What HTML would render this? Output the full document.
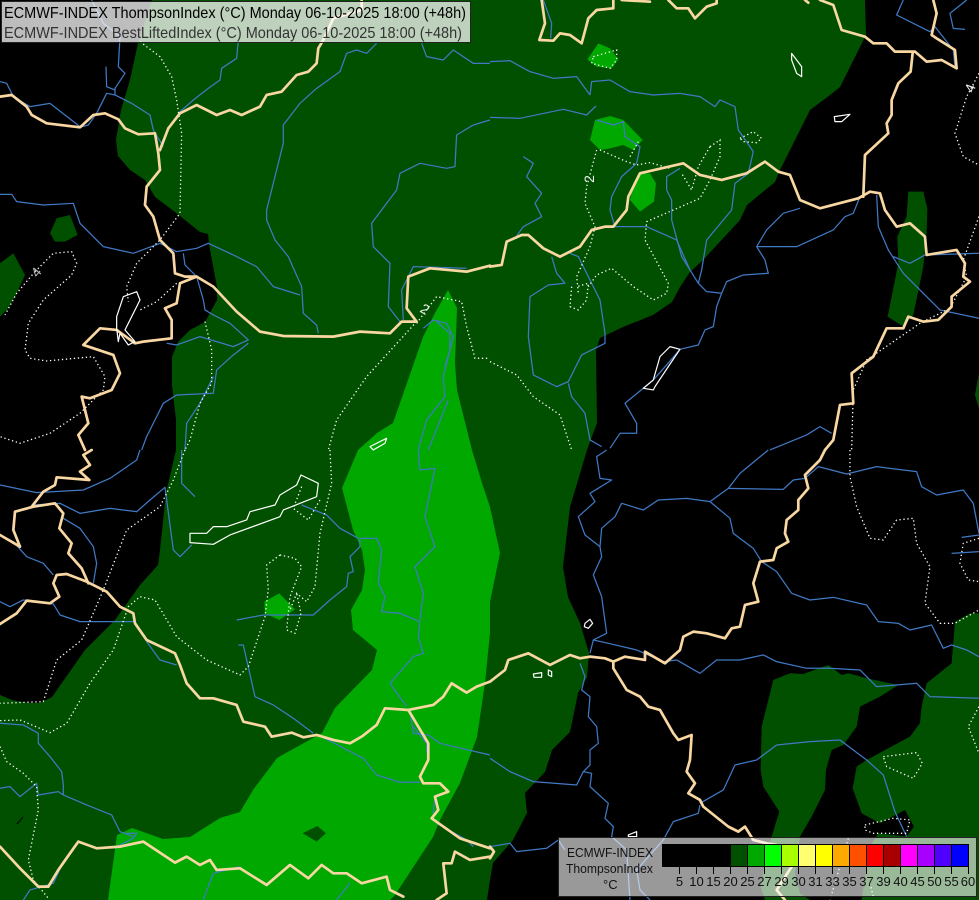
<!DOCTYPE html>
<html><head><meta charset="utf-8"><title>ECMWF-INDEX ThompsonIndex</title>
<style>
html,body{margin:0;padding:0;background:#000;overflow:hidden}
svg{display:block;position:absolute;left:0;top:0}
.r polyline{fill:none;stroke:#4079c4;stroke-width:1.25;stroke-linejoin:round;vector-effect:non-scaling-stroke}
.d polyline{fill:none;stroke:#fff;stroke-width:1.3;stroke-dasharray:1.3 2.7;vector-effect:non-scaling-stroke}
.b polyline{fill:none;stroke:#f9d7a2;stroke-width:2.7;stroke-linejoin:round;stroke-linecap:round;vector-effect:non-scaling-stroke}
.l polygon{fill:none;stroke:#fff;stroke-width:1.2;stroke-linejoin:round;vector-effect:non-scaling-stroke}
text{font-family:"Liberation Sans",sans-serif}
</style></head><body>
<svg width="979" height="900" viewBox="0 0 979 900" xmlns="http://www.w3.org/2000/svg">
<rect width="979" height="900" fill="#000"/>
<!-- dark green -->
<g fill="#005000">
<polygon points="152,0 865,0 866,35 840,87 830,95 810,110 780,170 775,182 747,205 740,220 703,260 690,272 680,287 672,302 653,315 623,327 600,338 596,350 597,423 587,450 570,507 563,567 568,597 580,623 589,653 587,677 578,693 570,732 552,750 545,772 525,793 527,813 513,840 493,863 490,880 487,900 0,900 0,695 12,700 28,703 40,703 52,697 85,650 115,620 140,585 158,565 160,550 166,493 176,450 176,420 172,385 172,357 178,342 190,330 205,322 217,300 217,287 210,250 208,234 200,232 175,212 155,197 145,180 130,170 118,156 116,140 121,110 130,80 138,43"/>
<g transform="scale(.3333)">
<polygon points="150,700 170,655 210,645 233,705 195,725 165,725"/>
<polygon points="0,790 40,760 75,825 50,880 25,925 0,950"/>
</g>
<g transform="translate(490,0) scale(.3333)">
<polygon points="1255,575 1300,575 1312,625 1310,700 1300,800 1270,945 1240,980 1193,950 1225,790 1222,710 1250,650"/>
<polygon points="1467,1120 1455,1185 1467,1225"/>
</g>
<g transform="translate(490,450) scale(.3333)">
<polygon points="850,690 900,670 940,672 1015,645 1055,675 1075,670 1130,685 1225,705 1170,740 1110,770 1100,830 1060,885 1025,900 1008,960 1005,1020 965,1100 930,1160 915,1270 930,1330 960,1350 825,1350 812,1310 825,1240 845,1160 868,1085 820,1010 812,960 815,830"/>
<polygon points="1467,490 1440,490 1395,515 1385,640 1310,700 1295,770 1290,820 1260,860 1130,930 1100,950 1088,1015 1115,1090 1170,1120 1245,1080 1272,1130 1250,1160 1165,1150 1140,1190 1115,1350 1467,1350"/>
</g>
</g>
<!-- mid green -->
<g fill="#00a800">
<polygon points="448,290 457,308 455,363 457,390 472,450 482,483 490,507 500,553 490,602 490,633 485,683 477,737 460,783 440,820 433,837 395,895 390,900 108,900 117,835 132,828 163,839 190,837 220,818 240,812 253,790 277,758 322,733 335,708 372,670 377,650 353,630 351,610 362,590 365,570 362,550 353,530 342,488 358,450 377,433 393,423 423,337 435,313"/>
<g transform="translate(490,0) scale(.3333)">
<polygon points="325,130 360,145 385,178 365,205 320,200 292,178"/>
<polygon points="315,360 360,348 400,360 458,420 430,450 400,435 360,445 330,450 300,420"/>
<polygon points="445,520 480,520 498,550 492,605 450,635 420,600 430,550"/>
</g>
<g transform="translate(0,450) scale(.3333)">
<polygon points="838,430 885,478 838,510 795,490 793,455"/>
<polygon points="908,1150 952,1128 978,1150 950,1175" fill="#005000"/>
</g>
</g>
<!-- rivers -->
<g class="r">
<g transform="scale(.3333)">
<polyline points="275,0 310,70 360,110 355,200 375,220 345,265 345,285 320,280 290,340 265,375 240,382"/>
<polyline points="318,200 320,260 345,270"/>
<polyline points="0,245 20,250 40,290 90,320 150,310 240,380"/>
<polyline points="345,285 395,310 450,345 460,390 490,440"/>
<polyline points="715,120 710,175 665,205 660,240 625,265 580,300 540,335 505,385 480,455"/>
<polyline points="1130,130 1100,160 1070,150 1040,160 1020,215 950,265 900,310 850,375 850,430 830,510 800,630 800,660 825,720 865,770 905,860 910,940 950,975 955,1000"/>
<polyline points="1265,130 1280,170 1330,180 1360,150 1420,190 1470,190"/>
<polyline points="1470,360 1420,375 1370,405 1365,500 1340,505 1260,490 1200,520 1190,570 1115,670 1120,740 1170,790 1165,920 1200,965"/>
<polyline points="0,583 35,583 50,605 130,615 220,610 240,670 310,740 400,760 480,730 530,755 590,745 625,730 700,765 770,800 820,860 900,885"/>
<polyline points="550,760 555,795 590,830 610,900 615,930 640,945 690,970 745,1020 700,1040 600,1010 530,1035 500,1030"/>
<polyline points="745,1030 700,1065 650,1110 640,1180 530,1185 490,1210 440,1310 425,1350"/>
<polyline points="1210,960 1205,870 1240,800 1400,805"/>
<polyline points="640,1130 600,1210 560,1270 555,1350"/>
<polyline points="1270,985 1300,960 1340,970 1360,1010 1330,1130 1335,1190 1280,1260 1255,1350"/>
<polyline points="1285,1350 1345,1200"/>
<polyline points="1310,965 1350,1000 1350,1050 1335,1100"/>
</g>
<g transform="translate(490,0) scale(.3333)">
<polyline points="0,185 60,182 120,215 190,235 260,230 300,285"/>
<polyline points="300,285 305,245 360,240 420,275 490,285 570,280 630,290 675,320 690,300 735,320 745,390 790,455 775,520 735,550 725,630 650,720 635,810 625,850 650,875 695,880 680,920 670,980 645,990 625,1035 570,1048 530,1095 490,1140 405,1210 440,1270 440,1300 390,1300 360,1345"/>
<polyline points="0,352 90,355 220,328 290,345 318,318"/>
<polyline points="100,470 130,490 110,530 155,580 135,610 155,650 100,680 75,715"/>
<polyline points="320,360 370,375 400,365 405,410 450,440 440,490 395,530 365,590 360,630 375,680 470,680 560,720 600,810 625,850"/>
<polyline points="570,505 530,530 530,570 545,600 545,660 575,770 600,810"/>
<polyline points="185,770 200,820 225,850 175,855 120,890 115,1010 130,1125 200,1160 235,1145 275,1065 345,1030 345,1000 330,900 290,820 265,770 240,760"/>
<polyline points="235,1150 245,1190 285,1240 300,1320 335,1340"/>
<polyline points="800,740 830,690 880,640 930,625"/>
<polyline points="800,740 825,780 835,820 760,825 710,845 695,880"/>
<polyline points="800,740 920,740 1030,690 1065,650 1090,640 1110,590"/>
<polyline points="1160,585 1165,680 1195,750 1240,820 1300,880 1350,930 1467,955"/>
<polyline points="1210,770 1260,790 1305,765 1467,760"/>
<polyline points="840,1350 950,1305 990,1280 1025,1300"/>
<polyline points="1240,0 1220,45 1320,95 1335,80 1390,150 1395,200"/>
<polyline points="1430,0 1380,40 1390,85 1425,88"/>
<polyline points="160,0 185,70 182,115"/>
</g>
<g transform="translate(0,450) scale(.3333)">
<polyline points="0,105 110,128 250,120 330,85 410,30 420,0"/>
<polyline points="100,165 180,160 240,190 330,175 410,185 450,150 495,112 520,300 540,320 575,285"/>
<polyline points="545,0 545,100 585,140"/>
<polyline points="190,205 240,235 280,290 290,340 280,400"/>
<polyline points="0,255 40,275 80,320 130,340 160,375"/>
<polyline points="0,455 30,470 70,450 160,462 180,495 240,515 350,515 405,515"/>
<polyline points="440,575 480,630 530,645"/>
<polyline points="710,510 790,495 860,495 940,495 990,450 1040,410 1045,370 1060,365 1050,320 1080,290 1080,265 1130,265 1145,300 1135,400 1155,440 1145,485 1200,490 1260,515 1255,560 1270,610 1240,620 1170,700 1220,770"/>
<polyline points="905,165 980,195 1020,235 1075,265"/>
<polyline points="715,585 730,585 765,740 820,765 880,805 940,850"/>
<polyline points="1255,0 1260,60 1305,55 1275,200 1305,290 1245,350 1270,430 1260,510"/>
<polyline points="1230,780 1240,850 1285,855 1320,880 1470,915"/>
<polyline points="965,860 1090,925 1130,975 1200,997 1260,997"/>
<polyline points="1240,830 1280,880 1280,910"/>
<polyline points="1305,1035 1300,1090"/>
<polyline points="1310,1120 1400,1170 1420,1190"/>
<polyline points="0,820 70,825 115,850 115,880 150,920 185,965 190,1005 190,1035 260,1065 335,1095 360,1145 400,1160"/>
<polyline points="0,1015 30,1010 60,1040 110,1000 115,1035 175,1025 190,1035"/>
<polyline points="70,1350 90,1320 160,1300 190,1235"/>
<polyline points="340,1195 400,1165 410,1150 380,1150"/>
<polyline points="610,1350 640,1270 720,1250"/>
<polyline points="1010,1350 1050,1300"/>
</g>
<g transform="translate(490,450) scale(.3333)">
<polyline points="0,925 60,965 130,995 260,1005 280,965 305,970 300,1010 355,1060 345,1105 370,1130 365,1160 410,1200 420,1350"/>
<polyline points="350,0 320,20 330,85 365,90 300,130 315,155 265,200 285,255 330,290 335,320 310,375 335,440 350,550 310,570 300,610"/>
<polyline points="835,0 750,70 715,115 660,155 590,145 505,150 460,180 395,160 375,200 335,235 330,290"/>
<polyline points="715,115 880,118 910,90 945,85 985,50 1070,72 1160,50 1280,65 1295,110 1340,135 1420,120 1450,160 1467,250"/>
<polyline points="660,155 720,205 730,250 790,295 815,335 860,365 905,430 960,450 1030,442 1130,465 1165,515 1225,520 1260,540 1325,525 1360,595 1385,585 1430,600 1467,620"/>
<polyline points="310,570 355,580 440,600 520,635 560,630 630,670 680,630 750,630 820,615 860,635 950,655 1020,655 1110,660 1160,710 1280,700 1320,740 1467,745"/>
<polyline points="270,640 285,680 275,720 300,740 295,800 320,830 325,880 300,900 300,945 280,965"/>
<polyline points="630,1060 700,1020 735,945 800,930 860,885 960,875 1050,870 1130,930 1180,975 1215,1085 1250,1160"/>
<polyline points="630,1065 625,1090 550,1115 520,1170 440,1260 450,1320 480,1350"/>
<polyline points="0,1190 60,1180 80,1205 170,1195 205,1170 225,1200"/>
<polyline points="1385,310 1467,305"/>
<polyline points="1415,262 1467,255"/>
</g>
</g>
<!-- dotted contours -->
<g class="d">
<g transform="scale(.3333)">
<polyline points="420,125 480,170 515,230 530,300 545,400 540,640 480,720 410,790 380,860 385,905"/>
<polyline points="530,850 470,905 420,930"/>
<polyline points="105,815 160,760 215,755 230,790 215,825 130,900 85,970 75,1050 90,1075 140,1083 280,1070 315,1130 310,1170 240,1240 150,1300 60,1330 0,1310"/>
<polyline points="105,815 50,880 15,945"/>
<polyline points="615,965 635,1050 635,1150 600,1210 570,1320 555,1350"/>
<polyline points="1250,965 1100,1130 1010,1260 985,1350"/>
<polyline points="1250,970 1310,890 1385,905 1400,980 1425,1075 1470,1075"/>
</g>
<g transform="translate(490,0) scale(.3333)">
<polyline points="0,1085 80,1125 130,1190 210,1245 245,1350"/>
<polyline points="320,450 290,560 285,610 315,680 300,740 260,830 265,880"/>
<polyline points="245,860 240,920 265,930 290,900 295,850 260,860"/>
<polyline points="330,450 410,485 440,495 480,488 540,505"/>
<polyline points="660,440 690,420 690,470 660,540 630,595 470,665 465,720 535,850 530,880 490,900 430,860 365,805 320,825 295,860"/>
<polyline points="660,440 625,500 605,570 575,520"/>
<polyline points="310,170 380,150 380,180 360,205 305,190 310,170"/>
<polyline points="750,415 790,395 815,415 800,428 760,425 750,415"/>
<polyline points="420,470 445,425"/>
<polyline points="1467,220 1430,290 1395,400 1420,470 1467,495"/>
<polyline points="1467,650 1420,780 1430,830 1380,925 1290,970 1130,1080 1090,1170 1085,1350"/>
</g>
<g transform="translate(0,450) scale(.3333)">
<polyline points="555,0 520,90 480,170 380,240 310,420 245,570 170,630 130,755 0,760"/>
<polyline points="990,0 995,100 960,250 945,410 920,455 890,430 870,480"/>
<polyline points="840,315 800,345 805,420 795,500 745,650 720,675 620,630 530,560 465,450 420,440 385,470 340,600 270,700 200,820 150,848 60,810 0,812"/>
<polyline points="840,315 885,325 905,350 870,440 860,540 885,550 903,490 890,430"/>
<polyline points="905,110 880,175 925,210 960,150"/>
<polyline points="0,890 20,935 70,970 110,1010 115,1080 85,1230 100,1290 145,1345"/>
</g>
<g transform="translate(490,450) scale(.3333)">
<polyline points="1080,0 1080,80 1100,170 1140,265 1180,270 1220,210 1270,205 1280,280 1320,350 1305,460 1350,520 1395,520 1467,480"/>
<polyline points="1467,265 1420,280 1410,340 1435,390 1467,395"/>
<polyline points="1467,770 1435,830 1467,910"/>
<polyline points="1180,920 1280,908 1297,940 1270,985 1190,950 1180,920"/>
<polyline points="1125,1125 1210,1105 1260,1110 1250,1150 1150,1150 1125,1140 1125,1125"/>
<polyline points="1075,1165 1020,1350"/>
<polyline points="1140,1300 1150,1340"/>
</g>
</g>
<!-- borders -->
<g class="b">
<g transform="scale(.3333)">
<polyline points="0,290 35,285 80,320 95,345 140,370 240,382 280,345 315,340 355,358 375,385 415,403 465,400 475,460 480,510 440,560 435,615 460,650 480,720 520,760 525,820 555,830 590,830 640,860 710,935 780,995 850,1008 1000,1010 1080,995 1170,1000 1205,965 1250,965 1220,925 1225,830 1290,805 1400,815 1470,797"/>
<polyline points="1085,0 1085,30 1000,55 970,120 955,145 950,190 925,215 890,225 845,275 800,285 780,320 725,345 690,330 650,345 590,315 540,340 505,385 480,450"/>
<polyline points="590,830 540,850 530,910 495,925 515,960 515,1015 430,1025 405,1030 350,990 300,985 250,1035 340,1065 360,1120 335,1170 270,1195 245,1190 265,1270 235,1305 255,1350"/>
</g>
<g transform="translate(490,0) scale(.3333)">
<polyline points="0,800 35,795 50,725 95,705 115,705 160,745 210,770 270,740 305,690 345,680 370,680 410,630 415,590 450,520 580,490 630,525 695,540 770,520 825,485 865,515 900,525 930,600 990,625 1105,595 1140,575 1170,580 1185,630 1220,680 1260,670 1305,710 1310,765 1400,750 1425,790 1420,830 1440,845 1385,890 1385,920 1345,960 1300,965 1255,950 1240,985 1190,985 1150,1070 1085,1120 1090,1210 1050,1215 1030,1320 1005,1350"/>
<polyline points="155,0 165,70 148,120 190,122 210,100 240,105 275,130 295,55 320,30 370,25 370,0"/>
<polyline points="395,0 480,5"/>
<polyline points="535,0 560,25 595,25 615,55 650,20 680,10 680,0"/>
<polyline points="945,0 955,8"/>
<polyline points="990,0 1030,15 1055,90 1125,110 1150,130 1190,130 1215,155 1275,155 1310,185 1355,180 1400,205 1395,150 1340,115 1325,105 1340,40 1330,0"/>
<polyline points="1268,160 1262,215 1225,250 1205,300 1205,345 1190,370 1195,400 1125,465 1120,590"/>
</g>
<g transform="translate(490,450) scale(.3333)">
<polyline points="1005,0 990,30 945,75 955,115 925,150 925,180 890,210 885,250 895,275 860,295 850,330 810,335 790,400 805,455 765,465 750,530 725,535 705,565 650,550 610,545 580,560 570,600 525,640 465,605 465,630 405,620 370,635 345,625 300,620 270,625 240,615 180,645 115,610 55,630 45,660 0,695"/>
<polyline points="370,635 370,655 410,720 450,740 475,770 510,780 550,850 565,870 605,855 600,930 590,965 615,1000 595,1030 630,1050 640,1070 715,1130 745,1145 765,1130 790,1170 830,1180 860,1185 905,1250 860,1320 885,1350"/>
<polyline points="0,1190 12,1205 0,1225"/>
</g>
<g transform="translate(0,450) scale(.3333)">
<polyline points="1470,695 1430,710 1400,728 1355,700 1330,740 1300,765 1225,780 1155,775 1130,825 1085,860 1050,880 1000,870 950,855 910,862 875,848 815,860 795,830 730,815 710,765 640,745 600,745 560,700 540,645 525,610 440,570 405,520 400,490 360,470 320,425 260,395 200,372 170,375 160,400 178,440 150,460 80,452 50,490 0,522"/>
<polyline points="1225,780 1285,880 1285,930 1260,980 1270,1000 1320,1000 1345,1025 1305,1040 1315,1080 1295,1105 1380,1165 1470,1195"/>
<polyline points="0,1190 60,1255 115,1310 145,1310 175,1260 210,1210 235,1175 290,1195 360,1190 430,1175 525,1238 560,1220 600,1245 630,1230 650,1260 720,1255 800,1305 870,1245 925,1285 965,1245 1000,1270 1040,1270 1085,1300 1160,1280 1170,1320 1210,1340"/>
<polyline points="1310,1350 1340,1330 1330,1240 1355,1240 1365,1205 1410,1230 1470,1220"/>
<polyline points="0,255 60,290 40,240 45,185 100,170 165,160 190,190 178,235 215,280 205,310 245,355 265,400"/>
<polyline points="275,0 250,15 270,45 240,65 268,90 170,82 165,105 130,125 95,170"/>
</g>
</g>
<!-- lakes -->
<g class="l">
<g transform="translate(0,450) scale(.3333)">
<polygon points="570,250 620,250 640,230 680,230 740,210 750,185 825,165 840,135 890,105 903,75 955,100 950,140 850,180 840,200 690,255 640,283 570,278"/>
</g>
<g transform="scale(.3333)">
<polygon points="350,950 370,890 410,875 420,900 385,970 375,990 405,1025 385,1035 360,1000 355,1025 350,985"/>
<polygon points="1110,1340 1160,1315 1155,1330 1120,1350"/>
</g>
<g transform="translate(490,0) scale(.3333)">
<polygon points="905,160 935,200 935,230 920,220 905,180"/>
<polygon points="1033,350 1080,343 1055,365 1035,365"/>
<polygon points="540,1040 570,1048 535,1100 495,1160 490,1170 460,1165 490,1140 510,1070"/>
</g>
<g transform="translate(490,450) scale(.3333)">
<polygon points="285,520 300,508 308,520 295,535 283,530"/>
<polygon points="130,672 155,668 155,682 132,682"/>
<polygon points="175,660 185,665 185,680 175,675"/>
<polygon points="415,1155 440,1145 440,1160 415,1160"/>
</g>
</g>
<line x1="17" y1="824" x2="23" y2="817" stroke="#000" stroke-width="1"/>
<!-- contour labels -->
<g fill="#f0f0f0" font-size="14" text-anchor="middle">
<text transform="translate(425,309) rotate(30)" x="0" y="5">2</text>
<text transform="translate(589,179) rotate(-90)" x="0" y="5">2</text>
<text transform="translate(36,272) rotate(-50)" x="0" y="5" fill="#bbb">4</text>
<text transform="translate(970,88) rotate(-70)" x="0" y="5">4</text>
</g>
<!-- header -->
<rect x="1.5" y="1.5" width="469" height="41" fill="#fff" fill-opacity=".74" stroke="#222"/>
<text x="4" y="18" font-size="16" fill="#000" textLength="462" lengthAdjust="spacingAndGlyphs">ECMWF-INDEX ThompsonIndex (°C) Monday 06-10-2025 18:00 (+48h)</text>
<text x="4" y="38" font-size="16" fill="#333" textLength="458" lengthAdjust="spacingAndGlyphs">ECMWF-INDEX BestLiftedIndex (°C) Monday 06-10-2025 18:00 (+48h)</text>
<!-- legend -->
<rect x="558.5" y="837.5" width="418" height="59" fill="#fff" fill-opacity=".6" stroke="#222"/>
<text x="567" y="857" font-size="13" fill="#111" textLength="86" lengthAdjust="spacingAndGlyphs">ECMWF-INDEX</text>
<text x="566" y="873" font-size="13" fill="#111" textLength="87" lengthAdjust="spacingAndGlyphs">ThompsonIndex</text>
<text x="603" y="889" font-size="13" fill="#111">°C</text>
<g shape-rendering="crispEdges">
<rect x="662" y="844" width="306" height="22" fill="#000"/>
<rect x="730" y="844" width="17" height="22" fill="#005000"/>
<rect x="747" y="844" width="17" height="22" fill="#00a800"/>
<rect x="764" y="844" width="17" height="22" fill="#00ff00"/>
<rect x="781" y="844" width="17" height="22" fill="#a8ff00"/>
<rect x="798" y="844" width="17" height="22" fill="#ffff70"/>
<rect x="815" y="844" width="17" height="22" fill="#ffff00"/>
<rect x="832" y="844" width="17" height="22" fill="#ffa800"/>
<rect x="849" y="844" width="17" height="22" fill="#ff5000"/>
<rect x="866" y="844" width="17" height="22" fill="#ff0000"/>
<rect x="883" y="844" width="17" height="22" fill="#a80000"/>
<rect x="900" y="844" width="17" height="22" fill="#ff00ff"/>
<rect x="917" y="844" width="17" height="22" fill="#a800ff"/>
<rect x="934" y="844" width="17" height="22" fill="#5000ff"/>
<rect x="951" y="844" width="17" height="22" fill="#0000ff"/>
<path d="M662.5 844.5H968.5V866.5H662.5Z" fill="none" stroke="#000"/>
<path d="M679.5 844V874M696.5 844V874M713.5 844V874M730.5 844V874M747.5 844V874M764.5 844V874M781.5 844V874M798.5 844V874M815.5 844V874M832.5 844V874M849.5 844V874M866.5 844V874M883.5 844V874M900.5 844V874M917.5 844V874M934.5 844V874M951.5 844V874M968.5 844V874" stroke="#000" fill="none"/>
</g>
<g font-size="13" fill="#111" text-anchor="middle">
<text x="679.5" y="886">5</text><text x="696.5" y="886">10</text><text x="713.5" y="886">15</text><text x="730.5" y="886">20</text><text x="747.5" y="886">25</text><text x="764.5" y="886">27</text><text x="781.5" y="886">29</text><text x="798.5" y="886">30</text><text x="815.5" y="886">31</text><text x="832.5" y="886">33</text><text x="849.5" y="886">35</text><text x="866.5" y="886">37</text><text x="883.5" y="886">39</text><text x="900.5" y="886">40</text><text x="917.5" y="886">45</text><text x="934.5" y="886">50</text><text x="951.5" y="886">55</text><text x="968" y="886">60</text>
</g>
</svg>
</body></html>
